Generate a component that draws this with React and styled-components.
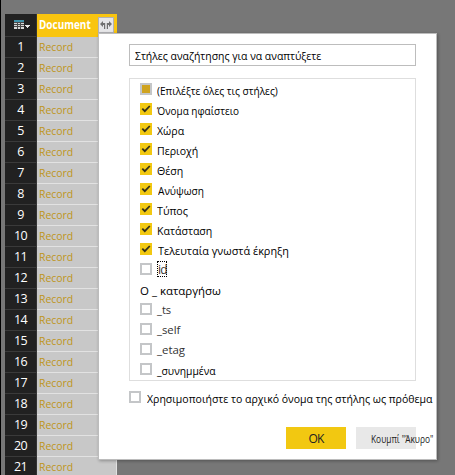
import React from 'react';
import styled, { createGlobalStyle } from 'styled-components';

const GlobalStyle = createGlobalStyle`
  * { box-sizing: border-box; }
  body { margin: 0; overflow: hidden; }
`;

const FONT = '"Open Sans", "Noto Sans", sans-serif';

const Screen = styled.main`
  position: relative;
  width: 455px;
  height: 475px;
  padding: 14px 0 0 4px;
  overflow: hidden;
  background: #777;
  border-left: 1px solid #000;
  font-family: ${FONT};
`;

const Condensed = styled.span`
  display: inline-block;
  transform: scaleX(${p => p.$scale ?? 0.907});
  transform-origin: left center;
  white-space: pre;
`;

const Table = styled.div`
  width: 112px;
`;

const HeaderRow = styled.div`
  display: grid;
  grid-template-columns: 32px 80px;
  height: 23px;
`;

const TableMenu = styled.div`
  display: flex;
  align-items: center;
  padding: 0 0 0 9px;
  background: #212121;
  border-right: 1px solid #333;
  border-bottom: 1px solid #3a3a3a;
`;

const ColumnHeader = styled.div`
  display: grid;
  grid-template-columns: 59px 16px;
  padding: 3px 0 0 2px;
  background: #f9c50f;
  color: #fff;
  font-size: 11.5px;
  font-weight: 700;
  line-height: 16px;
`;

const ExpandButton = styled.span`
  display: flex;
  align-items: center;
  justify-content: center;
  width: 16px;
  height: 16px;
  background: #e6e6e8;
  border: 1px solid #b2b2b6;
`;

const DataRow = styled.div`
  display: grid;
  grid-template-columns: 32px 80px;
  grid-template-rows: 21px;
  height: 21px;
`;

const RowNumber = styled.div`
  background: #212121;
  border-right: 1px solid #333;
  border-bottom: 1px solid #3a3a3a;
  color: #fff;
  font-size: 12.5px;
  line-height: 20px;
  letter-spacing: -0.6px;
  text-align: center;
`;

const RecordCell = styled.div`
  padding-left: 2px;
  background: #c8c8c8;
  border-right: 1px solid #e2e2e2;
  border-bottom: 1px solid #e2e2e2;
  color: #be9520;
  font-size: 11.5px;
  line-height: 20px;
`;

const Dialog = styled.section`
  position: absolute;
  left: 97px;
  top: 33px;
  width: 339px;
  height: 427px;
  padding: 10px 0 0 30px;
  background: #fff;
  border: 1px solid #bcbcbc;
  box-shadow: 1px 1px 3px rgba(0, 0, 0, 0.3);
`;

const SearchBox = styled.div`
  display: flex;
  align-items: center;
  width: 287px;
  height: 22px;
  padding: 0 0 0 5px;
  border: 1px solid #bdbdbd;
`;

const Options = styled.div`
  width: 287px;
  height: 303px;
  margin-top: 12px;
  padding: 0 0 0 10px;
  border: 1px solid #dedede;
`;

const Option = styled.div`
  display: flex;
  align-items: center;
  height: 20px;
`;

const Box = styled.span`
  display: flex;
  flex: none;
  align-items: center;
  justify-content: center;
  width: 12px;
  height: 12px;
  background: ${p => (p.$state === 'checked' ? '#f2c811' : p.$state === 'partial' ? '#cfa31f' : '#fff')};
  border: ${p => (p.$state === 'checked' ? '0' : '2px solid #c4c6c8')};
`;

const Label = styled(Condensed)`
  margin-left: ${p => p.$gap ?? 5}px;
  padding-top: ${p => p.$drop ?? 4}px;
  color: ${p => (p.$muted ? '#333' : '#000')};
  font-size: 11.5px;
  line-height: 16px;
`;

const FocusLabel = styled.span`
  height: 16px;
  width: 10px;
  margin-left: 5px;
  border: 1px dotted #000;
  color: #333;
  font-size: 12px;
  line-height: 15px;
  letter-spacing: -0.8px;
`;

const PrefixOption = styled.div`
  display: flex;
  align-items: center;
  height: 20px;
  margin-top: 6px;
`;

const Actions = styled.div`
  display: flex;
  gap: 10px;
  margin: 20px 0 0 157px;
`;

const Button = styled.button`
  display: flex;
  align-items: center;
  justify-content: ${p => (p.$primary ? 'center' : 'flex-start')};
  width: 60px;
  height: 22px;
  padding: ${p => (p.$primary ? '0' : '2px 0 0 15px')};
  background: ${p => (p.$primary ? '#f2c811' : '#e8e8e8')};
  border: 0;
  color: #222;
  font-family: ${FONT};
  font-size: ${p => (p.$primary ? 12 : 10)}px;
  letter-spacing: ${p => (p.$primary ? -0.9 : 0)}px;
  white-space: nowrap;
`;

const GridIcon = () => (
  <svg width="17" height="10" viewBox="0 0 17 10" shapeRendering="crispEdges">
    <path fill="#d8d8d8" d="M0 0h10v9H0z" />
    <path fill="#3f93ab" d="M0 0h10v2H0z" />
    <path fill="#4a4a4a" d="M0 2h10v1H0zM0 4h10v1H0zM0 6h10v1H0zM3 3h1v6H3zM6 3h1v6H6z" />
    <path fill="#e4e4e4" d="M11 5h5v1h-1v1h-1v1h-1V7h-1V6h-1z" />
  </svg>
);

const ExpandIcon = () => (
  <svg width="12" height="10" viewBox="0 0 12 10">
    <path fill="#707070" d="M0 4l3-3v2h2.2v6H4V5H3v2zM12 4L9 1v2H6.8v6H8V5h1v2z" />
  </svg>
);

const CheckIcon = () => (
  <svg width="12" height="12" viewBox="0 0 12 12">
    <path d="M2.3 5.6l2.5 2.6L9.8 3" fill="none" stroke="#333018" strokeWidth="1.8" />
  </svg>
);

const options = [
  { text: '(Επιλέξτε όλες τις στήλες)', state: 'partial', scale: 0.88 },
  { text: 'Όνομα ηφαίστειο', state: 'checked', scale: 0.866 },
  { text: 'Χώρα', state: 'checked', scale: 0.92 },
  { text: 'Περιοχή', state: 'checked', scale: 0.92 },
  { text: 'Θέση', state: 'checked', scale: 0.92 },
  { text: 'Ανύψωση', state: 'checked', gap: 6, scale: 0.88 },
  { text: 'Τύπος', state: 'checked', scale: 0.93 },
  { text: 'Κατάσταση', state: 'checked', scale: 0.92 },
  { text: 'Τελευταία γνωστά έκρηξη', state: 'checked', gap: 6, scale: 0.946 },
  { text: 'id', focused: true },
  { text: 'Ο _ καταργήσω', noBox: true, gap: 0, scale: 0.996 },
  { text: '_ts', muted: true, drop: 2, scale: 0.97 },
  { text: '_self', muted: true, drop: 2, scale: 0.985 },
  { text: '_etag', muted: true, drop: 2, scale: 0.995 },
  { text: '_συνημμένα', scale: 0.898 },
];

function OptionRow({ item }) {
  return (
    <Option>
      {!item.noBox && <Box $state={item.state}>{item.state === 'checked' && <CheckIcon />}</Box>}
      {item.focused ? (
        <FocusLabel>{item.text}</FocusLabel>
      ) : (
        <Label $muted={item.muted} $gap={item.gap} $drop={item.drop} $scale={item.scale}>
          {item.text}
        </Label>
      )}
    </Option>
  );
}

export default function App() {
  return (
    <Screen>
      <GlobalStyle />
      <Table>
        <HeaderRow>
          <TableMenu><GridIcon /></TableMenu>
          <ColumnHeader>
            <Condensed $scale={0.866}>Document</Condensed>
            <ExpandButton><ExpandIcon /></ExpandButton>
          </ColumnHeader>
        </HeaderRow>
        {Array.from({ length: 21 }, (_, i) => (
          <DataRow key={i}>
            <RowNumber>{i + 1}</RowNumber>
            <RecordCell><Condensed>Record</Condensed></RecordCell>
          </DataRow>
        ))}
      </Table>
      <Dialog>
        <SearchBox>
          <Label $gap={0} $drop={1}>Στήλες αναζήτησης για να αναπτύξετε</Label>
        </SearchBox>
        <Options>
          {options.map(item => <OptionRow key={item.text} item={item} />)}
        </Options>
        <PrefixOption>
          <Box />
          <Label $gap={6} $drop={3} $scale={0.915}>Χρησιμοποιήστε το αρχικό όνομα της στήλης ως πρόθεμα</Label>
        </PrefixOption>
        <Actions>
          <Button $primary>OK</Button>
          <Button><Condensed $scale={0.836}>Κουμπί "Άκυρο"</Condensed></Button>
        </Actions>
      </Dialog>
    </Screen>
  );
}
